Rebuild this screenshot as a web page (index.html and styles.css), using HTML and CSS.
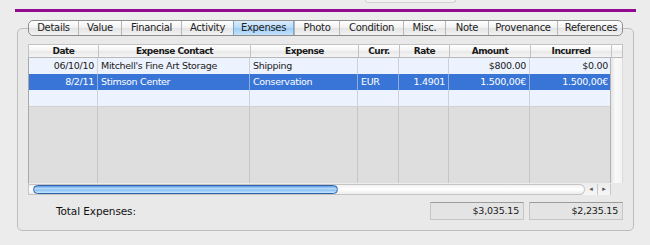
FILE: index.html
```html
<!DOCTYPE html>
<html lang="en">

<head>
    <meta charset="UTF-8">
    <title>Expenses</title>
    <link rel="stylesheet" href="styles.css">
</head>

<body>
    <div class="topfield"></div>
    <div class="rule"></div>

    <div class="tabview">
        <div class="tabs">
            <div class="tab">Details</div>
            <div class="tab">Value</div>
            <div class="tab">Financial</div>
            <div class="tab">Activity</div>
            <div class="tab active">Expenses</div>
            <div class="tab">Photo</div>
            <div class="tab">Condition</div>
            <div class="tab">Misc.</div>
            <div class="tab">Note</div>
            <div class="tab">Provenance</div>
            <div class="tab">References</div>
        </div>

        <div class="panel">
            <div class="table">
                <div class="head">
                    <div class="hcell">Date</div>
                    <div class="hcell">Expense Contact</div>
                    <div class="hcell">Expense</div>
                    <div class="hcell">Curr.</div>
                    <div class="hcell">Rate</div>
                    <div class="hcell">Amount</div>
                    <div class="hcell">Incurred</div>
                    <div class="hcell corner"></div>
                </div>

                <div class="body">
                    <div class="rows">
                        <div class="row">
                            <div class="cell num">06/10/10</div>
                            <div class="cell">Mitchell's Fine Art Storage</div>
                            <div class="cell">Shipping</div>
                            <div class="cell"></div>
                            <div class="cell num"></div>
                            <div class="cell num">$800.00</div>
                            <div class="cell num">$0.00</div>
                        </div>
                        <div class="row selected">
                            <div class="cell num">8/2/11</div>
                            <div class="cell">Stimson Center</div>
                            <div class="cell">Conservation</div>
                            <div class="cell">EUR</div>
                            <div class="cell num">1.4901</div>
                            <div class="cell num">1.500,00€</div>
                            <div class="cell num">1.500,00€</div>
                        </div>
                        <div class="row">
                            <div class="cell"></div>
                            <div class="cell"></div>
                            <div class="cell"></div>
                            <div class="cell"></div>
                            <div class="cell"></div>
                            <div class="cell"></div>
                            <div class="cell"></div>
                        </div>
                        <div class="row filler">
                            <div class="cell"></div>
                            <div class="cell"></div>
                            <div class="cell"></div>
                            <div class="cell"></div>
                            <div class="cell"></div>
                            <div class="cell"></div>
                            <div class="cell"></div>
                        </div>
                    </div>
                    <div class="vscroll"></div>
                </div>

                <div class="hscroll">
                    <div class="track">
                        <div class="thumb"></div>
                    </div>
                    <div class="arrows">
                        <span class="arrow">&#9666;</span>
                        <span class="arrow">&#9656;</span>
                    </div>
                    <div class="gap"></div>
                </div>
            </div>

            <div class="totals">
                <div class="total-label">Total Expenses:</div>
                <div class="total-box">$3,035.15</div>
                <div class="total-box">$2,235.15</div>
            </div>
        </div>
    </div>
</body>

</html>
```

FILE: styles.css
```css
body {
    font-family: "DejaVu Sans", sans-serif;
    font-size: 9.5px;
    color: #1a1a1a;
    background-color: #ececec;
    margin: 0;
    padding: 0;
}

.topfield {
    margin-left: 365px;
    width: 89px;
    height: 2px;
    background-color: #f2f2f2;
    border: 1px solid #d2d2d2;
    border-top: none;
    border-radius: 0 0 3px 3px;
}

.rule {
    margin: 6px 14px 0 15px;
    height: 3px;
    background-color: #910a8f;
}

.tabview {
    margin: 8px 0 0 17px;
    width: 617px;
}

.tabs {
    position: relative;
    z-index: 1;
    display: grid;
    grid-template-columns: 49px 43px 60px 52px 61px 45px 64px 42px 43px 69px 67px;
    margin: 0 0 -8px 11px;
    width: 595px;
    height: 16px;
    border: 1px solid #8e8e8e;
    border-radius: 5px;
    box-sizing: border-box;
    overflow: hidden;
    background: linear-gradient(#ffffff, #f1f1f1 50%, #e4e4e4 51%, #f2f2f2);
}

.tab {
    display: flex;
    align-items: center;
    justify-content: center;
    border-left: 1px solid #b6b6b6;
    font-size: 10px;
    letter-spacing: -0.3px;
    line-height: 14px;
    color: #222;
}

.tab:first-child {
    border-left: none;
}

.tab.active {
    background: linear-gradient(#d9ecfd, #b9dbf9 50%, #9fccf5 51%, #c4e3fc);
    border-left-color: #7aa5cf;
    border-right: 1px solid #7aa5cf;
}

.panel {
    background-color: #e9e9e9;
    border: 1px solid #bebebe;
    border-radius: 5px;
    padding: 15px 10px 10px 10px;
}

.table {
    display: flex;
    flex-direction: column;
    width: 595px;
}

.head {
    display: grid;
    grid-template-columns: 70px 152px 108px 41px 50px 81px 81px 12px;
    height: 14px;
    box-sizing: border-box;
    border-top: 1px solid #c3c3c3;
    border-bottom: 1px solid #b9b9b9;
    background: linear-gradient(#ffffff, #f3f3f3 50%, #e8e8e8 51%, #f5f5f5);
}

.hcell {
    text-align: center;
    font-weight: bold;
    font-size: 9px;
    letter-spacing: -0.5px;
    line-height: 12px;
    border-left: 1px solid #c2c2c2;
}

.hcell.corner {
    border-right: 1px solid #c2c2c2;
}

.body {
    display: flex;
}

.rows {
    display: flex;
    flex-direction: column;
    width: 583px;
    border-left: 1px solid #a9a9a9;
    border-right: 1px solid #b3b3b3;
    box-sizing: border-box;
}

.row {
    display: grid;
    grid-template-columns: 69px 152px 108px 41px 50px 81px 81px;
    height: 16px;
    background-color: #edf3fe;
}

.cell {
    border-right: 1px solid #cdd2d9;
    padding: 0 3px;
    line-height: 16px;
    letter-spacing: -0.3px;
    white-space: nowrap;
    overflow: hidden;
}

.cell:last-child {
    border-right: none;
}

.num {
    text-align: right;
}

.row.selected {
    background-color: #3875d7;
    color: #ffffff;
}

.row.selected .cell {
    border-right-color: #8eaee3;
}

.row.filler {
    height: 77px;
    background-color: #dedede;
    border-top: 1px solid #d2d2d2;
    box-sizing: border-box;
}

.row.filler .cell {
    border-right-color: #c6c6c6;
}

.vscroll {
    width: 12px;
    background: linear-gradient(to right, #e4e4e4, #f9f9f9 40%, #f4f4f4);
    border-right: 1px solid #dcdcdc;
    box-sizing: border-box;
}

.hscroll {
    display: flex;
    align-items: center;
    height: 12px;
    background: linear-gradient(#ebebeb, #f7f7f7);
    border-left: 1px solid #c6c6c6;
}

.track {
    display: flex;
    align-items: center;
    width: 556px;
    height: 11px;
    box-sizing: border-box;
    padding-left: 4px;
    border: 1px solid #c4c4c4;
    border-left: none;
    border-radius: 0 6px 6px 0;
    background: linear-gradient(#f2f2f2, #ffffff 50%, #ececec);
}

.thumb {
    width: 305px;
    height: 9px;
    box-sizing: border-box;
    border: 1px solid #2e62ad;
    border-radius: 5px;
    background: linear-gradient(#5d9ae2, #b4d9fb 35%, #8ec4f3 60%, #c9e6fd);
}

.arrows {
    display: flex;
    width: 26px;
}

.arrow {
    width: 12px;
    height: 11px;
    font-size: 7px;
    line-height: 11px;
    text-align: center;
    color: #555;
    border-right: 1px solid #c8c8c8;
}

.gap {
    flex: 1;
    height: 12px;
    background-color: #e9e9e9;
}

.totals {
    display: flex;
    align-items: center;
    margin-top: 7px;
    height: 18px;
}

.total-label {
    flex: 1;
    padding-left: 28px;
    font-size: 10.5px;
    letter-spacing: -0.1px;
    color: #111;
}

.total-box {
    width: 94px;
    height: 18px;
    box-sizing: border-box;
    margin-left: 5px;
    padding-right: 4px;
    text-align: right;
    line-height: 16px;
    letter-spacing: -0.2px;
    background-color: #e4e4e4;
    border: 1px solid #c6c6c6;
    border-top-color: #9c9c9c;
}
```
